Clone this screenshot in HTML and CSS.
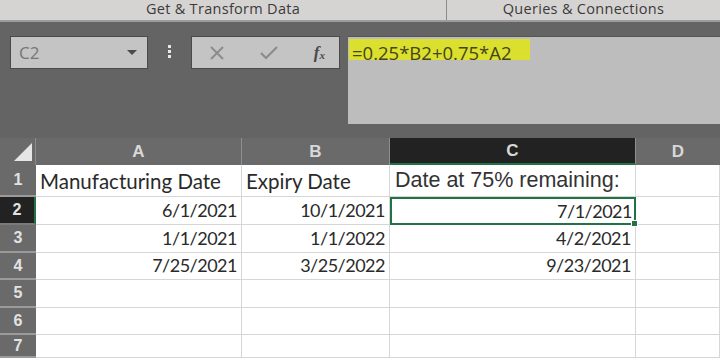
FILE: index.html
```html
<!DOCTYPE html>
<html>

<head>
    <meta charset="UTF-8">
    <meta name="viewport" content="width=device-width, initial-scale=1.0">
    <title>Date at 75% remaining</title>
    <link rel="stylesheet" href="styles.css">
</head>

<body>
    <div class="ribbon">
        <div class="ribbon-group first">Get &amp; Transform Data</div>
        <div class="ribbon-group">Queries &amp; Connections</div>
    </div>

    <div class="formula-bar">
        <div class="name-box">
            <span>C2</span>
            <span class="caret"></span>
        </div>
        <div class="dots">
            <span></span><span></span><span></span>
        </div>
        <div class="fx-buttons">
            <svg width="16" height="16" viewBox="0 0 16 16">
                <path d="M2 2 L14 14 M14 2 L2 14" stroke="#8c8c8c" stroke-width="2" fill="none" />
            </svg>
            <svg width="20" height="16" viewBox="0 0 20 16">
                <path d="M2 8 L7 13 L18 2" stroke="#8c8c8c" stroke-width="2.2" fill="none" />
            </svg>
            <span class="fx">f<sub>x</sub></span>
        </div>
        <div class="formula-input">
            <span class="formula">=0.25*B2+0.75*A2</span>
        </div>
    </div>

    <div class="sheet">
        <div class="corner"><span class="corner-tri"></span></div>
        <div class="col-head">A</div>
        <div class="col-head">B</div>
        <div class="col-head selected">C</div>
        <div class="col-head last">D</div>

        <div class="row-head">1</div>
        <div class="cell">Manufacturing Date</div>
        <div class="cell">Expiry Date</div>
        <div class="cell arial">Date at 75% remaining:</div>
        <div class="cell"></div>

        <div class="row-head selected">2</div>
        <div class="cell num">6/1/2021</div>
        <div class="cell num">10/1/2021</div>
        <div class="cell num active">7/1/2021</div>
        <div class="cell"></div>

        <div class="row-head">3</div>
        <div class="cell num">1/1/2021</div>
        <div class="cell num">1/1/2022</div>
        <div class="cell num">4/2/2021</div>
        <div class="cell"></div>

        <div class="row-head">4</div>
        <div class="cell num">7/25/2021</div>
        <div class="cell num">3/25/2022</div>
        <div class="cell num">9/23/2021</div>
        <div class="cell"></div>

        <div class="row-head">5</div>
        <div class="cell"></div>
        <div class="cell"></div>
        <div class="cell"></div>
        <div class="cell"></div>

        <div class="row-head">6</div>
        <div class="cell"></div>
        <div class="cell"></div>
        <div class="cell"></div>
        <div class="cell"></div>

        <div class="row-head">7</div>
        <div class="cell"></div>
        <div class="cell"></div>
        <div class="cell"></div>
        <div class="cell"></div>
    </div>
</body>

</html>
```

FILE: styles.css
```css
body {
    margin: 0;
    padding: 0;
    width: 720px;
    height: 358px;
    overflow: hidden;
    background-color: #646464;
    font-family: "Open Sans", "Liberation Sans", sans-serif;
}

.ribbon {
    display: flex;
    height: 20px;
    background-color: #d6d4d2;
    border-bottom: 2px solid #9c9c9c;
    color: #3a3a3a;
    font-size: 14.5px;
    line-height: 18px;
}

.ribbon-group {
    flex: 1;
    text-align: center;
    letter-spacing: 0.3px;
}

.ribbon-group.first {
    flex: 0 0 446px;
    border-right: 1px solid #8a8a8a;
}

.formula-bar {
    display: flex;
    align-items: flex-start;
    height: 116px;
    padding-top: 14px;
    box-sizing: border-box;
}

.name-box {
    display: flex;
    align-items: center;
    justify-content: space-between;
    margin-left: 10px;
    width: 138px;
    height: 33px;
    box-sizing: border-box;
    padding: 0 10px 0 8px;
    background-color: #c4c4c4;
    border: 1px solid #4a4a4a;
    color: #767676;
    font-size: 17px;
}

.caret {
    width: 0;
    height: 0;
    border-left: 5px solid transparent;
    border-right: 5px solid transparent;
    border-top: 5px solid #4a4a4a;
}

.dots {
    display: flex;
    flex-direction: column;
    align-items: center;
    gap: 2px;
    width: 43px;
    padding-top: 9px;
}

.dots span {
    width: 3px;
    height: 3px;
    background-color: #e8e8e8;
}

.fx-buttons {
    display: flex;
    align-items: center;
    justify-content: space-between;
    width: 149px;
    height: 33px;
    box-sizing: border-box;
    padding: 0 14px 0 17px;
    background-color: #c4c4c4;
    border: 1px solid #4a4a4a;
}

.fx {
    font-family: "Liberation Serif", serif;
    font-style: italic;
    font-weight: bold;
    font-size: 17px;
    color: #4a4a4a;
}

.fx sub {
    font-size: 11px;
    vertical-align: -1px;
}

.formula-input {
    flex: 1;
    margin-left: 8px;
    height: 88px;
    padding: 2px 0 0 1px;
    box-sizing: border-box;
    background-color: #bdbdbd;
    border-top: 1px solid #555;
}

.formula {
    display: inline-block;
    padding: 0 18px 0 3px;
    height: 21px;
    line-height: 27px;
    background-color: #dbe02e;
    color: #46441a;
    font-size: 18.5px;
}

.sheet {
    display: grid;
    grid-template-columns: 36px 206px 148px 246px 84px;
    grid-template-rows: 27px 32px 28px 28px 27px 28px 27px 23px;
}

.corner {
    position: relative;
    background-color: #6a6a6a;
    border-right: 1px solid #8a8a8a;
}

.corner-tri {
    position: absolute;
    right: 3px;
    bottom: 4px;
    width: 0;
    height: 0;
    border-left: 18px solid transparent;
    border-bottom: 18px solid #e6e6e6;
}

.col-head {
    display: flex;
    align-items: center;
    justify-content: center;
    background-color: #6a6a6a;
    border-right: 1px solid #8e8e8e;
    color: #d8d8d8;
    font-family: "Liberation Sans", sans-serif;
    font-weight: bold;
    font-size: 17px;
}

.col-head.selected {
    background-color: #222;
    border-bottom: 2px solid #217346;
    color: #d8d8d8;
}

.col-head.last {
    border-right: none;
}

.row-head {
    display: flex;
    align-items: center;
    justify-content: center;
    background-color: #6a6a6a;
    border-bottom: 2px solid #9a9a9a;
    color: #e2e2e2;
    font-family: "Liberation Sans", sans-serif;
    font-weight: bold;
    font-size: 16px;
}

.row-head.selected {
    background-color: #222;
    border-right: 2px solid #217346;
    border-bottom-color: #7a7a7a;
}

.cell {
    display: flex;
    align-items: flex-end;
    padding: 0 4px 3px 4px;
    background-color: #fff;
    border-right: 1px solid #d6d6d6;
    border-bottom: 1px solid #d6d6d6;
    color: #2a2a2a;
    font-family: Lato, "Liberation Sans", sans-serif;
    font-size: 20.5px;
    white-space: nowrap;
}

.cell.arial {
    font-family: "Liberation Sans", sans-serif;
    font-size: 21.5px;
    color: #333;
    padding-left: 5px;
}

.cell.num {
    justify-content: flex-end;
    font-size: 18px;
    letter-spacing: -0.5px;
}

.cell.active {
    position: relative;
    border: 2px solid #217346;
    padding-right: 2px;
    padding-bottom: 1px;
}

.cell.active::after {
    content: "";
    position: absolute;
    right: -4px;
    bottom: -4px;
    width: 5px;
    height: 5px;
    background-color: #217346;
    border: 1px solid #fff;
}
```
